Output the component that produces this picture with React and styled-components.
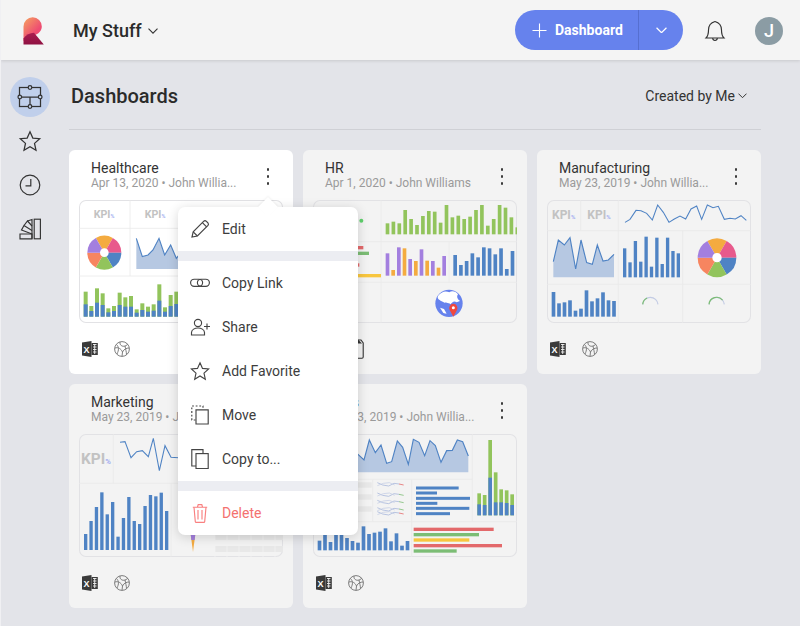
import React from 'react';
import styled, { createGlobalStyle } from 'styled-components';

const Global = createGlobalStyle`
    html, body {
        margin : 0;
        padding : 0;
        background : #e3e4e9;
    }
    body {
        font-family : Roboto, "Liberation Sans", sans-serif;
        color : #333;
        overflow : hidden;
    }
`

const Page = styled.div`
    width : 800px;
    height : 626px;
    overflow : hidden;
    box-sizing : border-box;
    border-left : 1px solid #f0f0f3;
`

/* top bar */
const Header = styled.header`
    height : 60px;
    background : #f4f4f4;
    box-shadow : 0 1px 3px rgba(0, 0, 0, 0.12);
    display : flex;
    align-items : center;
    padding : 0 17px 0 22px;
    box-sizing : border-box;
    position : relative;
`
const Brand = styled.svg`
    width : 21px;
    height : 28px;
    display : block;
    margin-right : 29px;
    margin-top : 1px;
`
const HeaderTitle = styled.div`
    display : flex;
    align-items : center;
    gap : 6px;
    font-size : 18px;
    font-weight : 500;
    color : #2b2b2b;
    flex : 1;
    padding-top : 1px;
`
const SplitButton = styled.div`
    display : flex;
    height : 40px;
    border-radius : 20px;
    background : #6682ed;
    color : #fff;
    align-items : stretch;
`
const MainAction = styled.div`
    width : 124px;
    box-sizing : border-box;
    display : flex;
    align-items : center;
    padding-left : 17px;
    gap : 8px;
    font-size : 14px;
    font-weight : 700;
    border-right : 1px solid #566fd0;
`
const CaretAction = styled.div`
    width : 44px;
    display : flex;
    align-items : center;
    justify-content : center;
`
const Bell = styled.svg`
    width : 24px;
    height : 24px;
    margin : 2px 28px 0 20px;
    display : block;
`
const Avatar = styled.div`
    width : 28px;
    height : 28px;
    border-radius : 50%;
    background : #8b9ca4;
    color : #fff;
    font-size : 18px;
    font-weight : 500;
    display : flex;
    align-items : center;
    justify-content : center;
    margin-top : 1px;
`

const Body = styled.div`
    display : flex;
`
const Sidebar = styled.nav`
    width : 68px;
    flex : none;
    padding : 17px 0 0 9px;
    box-sizing : border-box;
    display : flex;
    flex-direction : column;
`
const SideItem = styled.div`
    width : 40px;
    height : ${(p) => (p.$active ? '40px' : '44px')};
    border-radius : ${(p) => (p.$active ? '50%' : '0')};
    background : ${(p) => (p.$active ? '#c0cfeb' : 'transparent')};
    margin-bottom : ${(p) => (p.$active ? '2px' : '0')};
    display : flex;
    align-items : center;
    justify-content : center;
`
const Main = styled.main`
    width : 692px;
`
const PageHead = styled.div`
    height : 70px;
    box-sizing : border-box;
    border-bottom : 1px solid #cfd0d5;
    display : flex;
    align-items : center;
    justify-content : space-between;
    padding : 2px 14px 0 2px;
`
const PageTitle = styled.h1`
    margin : 0;
    font-size : 20px;
    font-weight : 500;
    color : #2b2b2b;
`
const Filter = styled.div`
    display : flex;
    align-items : center;
    gap : 3px;
    font-size : 14px;
    color : #333;
`
const CardGrid = styled.div`
    display : grid;
    grid-template-columns : repeat(3, 224px);
    grid-auto-rows : 224px;
    gap : 10px;
    margin-top : 20px;
`

/* dashboard card */
const Card = styled.article`
    position : relative;
    background : ${(p) => (p.$selected ? '#fff' : '#f3f3f3')};
    border-radius : 6px;
    padding : 0 10px;
`
const CardHead = styled.div`
    height : 50px;
    box-sizing : border-box;
    padding : 11px 0 0 12px;
    display : flex;
    justify-content : space-between;
`
const CardTitle = styled.div`
    font-size : 14px;
    line-height : 15px;
    color : #333;
`
const CardMeta = styled.div`
    font-size : 12px;
    line-height : 15px;
    color : #9a9a9a;
    white-space : nowrap;
`
const Kebab = styled.div`
    display : flex;
    flex-direction : column;
    gap : 4.5px;
    margin : 7px 14px 0 0;
`
const Dot = styled.span`
    width : 2.5px;
    height : 2.5px;
    border-radius : 50%;
    background : #3a3a3a;
`
const Thumb = styled.div`
    width : 204px;
    height : 123px;
    border-radius : 7px;
    box-shadow : inset 0 0 0 1px #e2e2e5;
    svg {
        display : block;
        width : 204px;
        height : 123px;
    }
    text {
        font-family : Roboto, "Liberation Sans", sans-serif;
    }
`
const CardFoot = styled.div`
    display : flex;
    gap : 16px;
    padding : 18px 0 0 3px;
`
const SourceIcon = styled.svg`
    width : 16px;
    height : 16px;
    display : block;
    text {
        font-family : "Liberation Sans", sans-serif;
    }
`

/* context menu */
const Menu = styled.div`
    position : absolute;
    left : 109px;
    top : 57px;
    width : 180px;
    background : #fff;
    border-radius : 7px;
    box-shadow : 0 2px 12px rgba(0, 0, 0, 0.16);
    z-index : 10;
`
const MenuCaret = styled.span`
    position : absolute;
    left : 83px;
    top : -7px;
    width : 14px;
    height : 14px;
    background : #fff;
    transform : rotate(45deg);
    box-shadow : -1px -1px 2px rgba(0, 0, 0, 0.05);
`
const MenuItem = styled.div`
    position : relative;
    height : 44px;
    display : flex;
    align-items : center;
    gap : 12px;
    padding-left : 12px;
    font-size : 14px;
    color : ${(p) => (p.$danger ? '#f4716f' : '#3d3d3d')};
`
const MenuGap = styled.div`
    height : 10px;
    background : #ecedf2;
`
const MenuIcon = styled.svg`
    width : 20px;
    height : 20px;
    display : block;
    flex : none;
    fill : none;
    stroke : ${(p) => (p.$danger ? '#f98080' : '#444')};
    stroke-width : 1.15;
`
const NavIcon = styled.svg`
    width : 26px;
    height : 26px;
    display : block;
    fill : none;
    stroke : #333;
    stroke-width : 1.25;
`

const Chevron = ({ w = 10, color = '#333', sw = 1.1 }) => (
    <svg width={w} height={w * 0.6} viewBox="0 0 10 6" style={{ display: 'block' }}>
        <path d="M0.5 0.7 L5 5.2 L9.5 0.7" fill="none" stroke={color} strokeWidth={sw} />
    </svg>
);

const ExcelIcon = () => (
    <SourceIcon viewBox="0 0 16 16">
        <path d="M0 1.6 L9.5 0 V16 L0 14.4 Z" fill="#3a3a3a" />
        <rect x="9.5" y="2" width="6.3" height="12" fill="#3a3a3a" />
        <path d="M11 3.5 H14.5 M11 6 H14.5 M11 8.5 H14.5 M11 11 H14.5 M12.7 3 V13" stroke="#f3f3f3" strokeWidth="0.9" />
        <text x="1.6" y="11.6" fontSize="9" fontWeight="700" fill="#fff">X</text>
    </SourceIcon>
);
const GlobeIcon = () => (
    <SourceIcon viewBox="0 0 16 16">
        <g fill="none" stroke="#777" strokeWidth="0.95">
            <circle cx="8" cy="8" r="7.4" />
            <path d="M2.5 3.5 C5 6 5 9 3 13 M6 1 C5.5 4 8 6 11 5 C13 4.4 14 3.5 13 2.6 M1 7 C4 6 7 7.5 8.5 11 L8 15.3 M15.2 7 C12.5 7 10 8 8.5 11 M11 5 C11.5 8 12.5 11 12.5 13.6" />
        </g>
    </SourceIcon>
);
const ClipIcon = () => (
    <SourceIcon viewBox="0 0 16 20" style={{ height: 20, marginTop: -2 }}>
        <path d="M9.5 1 H13 L15.2 4 V18 Q15.2 19.2 14 19.2 H2 Q1 19.2 1 18 V4 Q1 3 2 3 H9.5" fill="none" stroke="#333" strokeWidth="1.1" />
        <path d="M9.5 0 L14 4.5 H9.5 Z" fill="#333" />
    </SourceIcon>
);

/* chart parts, coordinates are 3x pixels so one unit is a third of a pixel */
const C = {
    blue: '#4f83c4',
    area: '#b6c8e2',
    green: '#92c45c',
    purple: '#a37fdf',
    orange: '#f4ab40',
    red: '#e3696b',
    grass: '#7cbd75',
    yellow: '#f8c63e',
    line: '#eaeaea',
};

const Bars = ({ x, pitch, w = 11, bottom, tops, colors = [C.blue] }) => (
    <g>
        {tops.map((t, i) => (
            <rect key={i} x={x + i * pitch} y={t} width={w} height={bottom - t} fill={colors[i % colors.length]} />
        ))}
    </g>
);
const HBars = ({ x, h = 10, rows }) => (
    <g>
        {rows.map(([y, to, color], i) => (
            <rect key={i} x={x} y={y - h / 2} width={to - x} height={h} fill={color} />
        ))}
    </g>
);
const toPoints = (pts) => pts.map((p) => p.join(',')).join(' ');
const Area = ({ pts, base }) => (
    <g>
        <polygon
            points={`${pts[0][0]},${base} ${toPoints(pts)} ${pts[pts.length - 1][0]},${base}`}
            fill={C.area}
        />
        <polyline points={toPoints(pts)} fill="none" stroke={C.blue} strokeWidth="3.4" />
    </g>
);
const Trend = ({ pts }) => <polyline points={toPoints(pts)} fill="none" stroke={C.blue} strokeWidth="3.2" />;
const Grid = ({ d, color = C.line }) => <path d={d} fill="none" stroke={color} strokeWidth="2.4" />;

const wedge = (cx, cy, r, a, b) => {
    const p = (d) => [cx + r * Math.sin((d * Math.PI) / 180), cy - r * Math.cos((d * Math.PI) / 180)];
    const [x1, y1] = p(a);
    const [x2, y2] = p(b);
    return `M${cx} ${cy} L${x1} ${y1} A${r} ${r} 0 0 1 ${x2} ${y2} Z`;
};
const Pie = ({ cx, cy, r, hole }) => (
    <g>
        {['#f4ab40', '#e85a8c', '#4f83c4', '#92c45c', '#f78560', '#a37fdf'].map((c, i) => (
            <path key={c} d={wedge(cx, cy, r, i * 60 - 30, i * 60 + 30)} fill={c} />
        ))}
        <circle cx={cx} cy={cy} r={hole} fill="#fff" />
    </g>
);
const Kpi = ({ x, y, size }) => (
    <text x={x} y={y} fontSize={size} fontWeight="700" fill="#c2c2c2" textAnchor="middle">
        KPI<tspan fontSize={size * 0.5} fill="#a3aef0">%</tspan>
    </text>
);
const Gauge = ({ cx, cy, r, split }) => {
    const a = (d) => `${cx + r * Math.sin((d * Math.PI) / 180)} ${cy - r * Math.cos((d * Math.PI) / 180)}`;
    return (
        <g fill="none" strokeWidth="3.6">
            <path d={`M${a(-85)} A${r} ${r} 0 0 1 ${a(85)}`} stroke="#c3cbe4" />
            <path d={`M${a(-85)} A${r} ${r} 0 0 1 ${a(split)}`} stroke="#7cbd75" />
        </g>
    );
};

const ThumbSvg = ({ ox, oy, children }) => (
    <svg viewBox={`${ox} ${oy} 612 369`}>{children}</svg>
);

const HealthcareThumb = () => (
    <ThumbSvg ox={28} oy={15}>
        <Grid d="M181 15 V243 M28 100 H640 M28 243 H640" />
        <Kpi x={103} y={68} size={32} />
        <Kpi x={256} y={68} size={32} />
        <Pie cx={104} cy={173} r={51} hole={13} />
        <Area
            base={222}
            pts={[[200, 130], [218, 185], [235, 180], [250, 165], [268, 130], [285, 180], [303, 150], [320, 190], [336, 170]]}
        />
        <Bars x={42} pitch={17} w={12} bottom={365} colors={[C.green]}
            tops={[290, 333, 280, 295, 340, 333, 293, 307, 303, 343, 325, 335, 328, 268, 337, 300, 290]} />
        <Bars x={42} pitch={17} w={12} bottom={365}
            tops={[328, 348, 323, 330, 352, 348, 330, 335, 335, 353, 345, 350, 347, 317, 350, 333, 327]} />
    </ThumbSvg>
);

const HrThumb = () => (
    <ThumbSvg ox={39} oy={15}>
        <Grid d="M243 15 V384 M447 140 V262 M39 140 H651 M39 262 H651" />
        <circle cx={184} cy={77} r={6} fill="#5fd16d" />
        <HBars x={60} h={10} rows={[[158, 190, C.red], [175, 207, C.grass], [210, 178, C.red], [242, 243, C.yellow]]} />
        <Bars x={257} pitch={17.7} bottom={118} colors={[C.green]}
            tops={[85, 80, 85, 45, 72, 90, 63, 48, 50, 83, 30, 67, 62, 72, 65, 45, 30, 92, 72, 30, 38, 67, 97]} />
        <Bars x={257} pitch={17} bottom={242} colors={[C.purple, C.orange]}
            tops={[175, 225, 157, 160, 192, 198, 163, 197, 198, 218, 183]} />
        <Bars x={460} pitch={17.2} bottom={242}
            tops={[180, 210, 198, 175, 187, 157, 160, 178, 160, 222, 168]} />
        <circle cx={447} cy={325} r={41} fill="#6682ed" />
        <path d="M414 303 C424 290 436 286 448 292 C456 286 468 290 474 298 C468 306 474 314 480 318 L470 322 C462 316 456 322 452 328 C444 320 436 326 428 320 C420 316 410 312 414 303 Z" fill="#fff" />
        <path d="M420 338 L432 342 L440 356 L430 354 Z" fill="#fff" />
        <path d="M460 365 L449 345 A12.5 12.5 0 1 1 471 345 Z" fill="#f0483e" />
        <circle cx={460} cy={338} r={4.5} fill="#fff" />
    </ThumbSvg>
);

const ManufacturingThumb = () => (
    <ThumbSvg ox={36} oy={15}>
        <Grid d="M137 15 V107 M250 15 V384 M443 107 V384 M36 107 H648 M36 268 H648" />
        <Kpi x={86} y={72} size={36} />
        <Kpi x={192} y={72} size={36} />
        <Trend pts={[[270, 82], [285, 73], [303, 46], [318, 47], [335, 55], [352, 75], [368, 30], [385, 52], [402, 82], [418, 72], [435, 63], [452, 72], [468, 42], [485, 33], [500, 73], [517, 30], [534, 38], [550, 34], [568, 73], [585, 70], [601, 72], [618, 62], [634, 76]]} />
        <Area base={247}
            pts={[[55, 200], [70, 135], [88, 150], [105, 128], [122, 222], [138, 135], [155, 203], [172, 208], [187, 150], [204, 198], [220, 195], [237, 178]]} />
        <Bars x={264} pitch={16.1} w={10} bottom={247}
            tops={[160, 202, 138, 200, 125, 215, 128, 207, 128, 168, 175]} />
        <Pie cx={546} cy={188} r={58} hole={14} />
        <Bars x={50} pitch={16.5} w={11} bottom={365}
            tops={[291, 325, 322, 316, 347, 341, 286, 319, 310, 292, 316, 318]} />
        <Gauge cx={346} cy={330} r={23} split={-25} />
        <Gauge cx={545} cy={330} r={23} split={50} />
    </ThumbSvg>
);

const MarketingThumb = () => (
    <ThumbSvg ox={27} oy={147}>
        <Grid d="M130 147 V295 M303 295 V516 M27 295 H639" />
        <Kpi x={78} y={238} size={46} />
        <Trend pts={[[150, 172], [165, 170], [183, 218], [200, 200], [217, 197], [235, 215], [250, 160], [268, 257], [285, 182], [303, 217], [325, 218], [342, 200]]} />
        <Bars x={42} pitch={16.2} w={10} bottom={495}
            tops={[447, 408, 366, 322, 388, 351, 455, 399, 336, 408, 417, 363, 330, 334, 323, 378]} />
        <path d="M362 447 H376 L369 501 Z" fill={C.orange} />
        <path d="M362 447 H376 L374 465 H364 Z" fill={C.purple} />
        {[447, 483].map((y) => (
            <rect key={y} x={435} y={y} width={204} height={18} fill="#e8e8e8" />
        ))}
        <path d="M435 447 V516 M471 447 V516 M507 447 V516 M543 447 V516 M579 447 V516 M615 447 V516" stroke="#f3f3f3" strokeWidth="2.4" />
    </ThumbSvg>
);

const Spark = ({ y, end }) => (
    <g fill="none" strokeWidth="2.4">
        <path d={`M232 ${y - 4} L248 ${y + 3} L266 ${y + 6} L282 ${y - 2} L297 ${y}`} stroke="#a8b8dc" />
        <path d={`M232 ${y + 5} L250 ${y - 2} L268 ${y - 4} L284 ${y + 3}`} stroke="#c6cfe6" />
        <path d={`M297 ${y} L311 ${y + 3}`} stroke={end} />
    </g>
);

const SalesThumb = () => (
    <ThumbSvg ox={39} oy={147}>
        <Grid d="M335 283 V516 M517 147 V410 M39 283 H517 M39 410 H651 M218 283 V410" />
        <Area base={262}
            pts={[[60, 200], [100, 170], [140, 220], [174, 208], [192, 225], [208, 165], [226, 203], [243, 180], [260, 235], [275, 230], [292, 168], [308, 187], [325, 238], [340, 163], [357, 172], [374, 212], [390, 167], [406, 182], [423, 232], [440, 197], [457, 196], [472, 165], [488, 170], [505, 213]]} />
        {[292, 328, 364].map((y) => (
            <rect key={y} x={60} y={y} width={155} height={16} fill="#e8e8e8" />
        ))}
        <Spark y={297} end={C.red} />
        <Spark y={328} end={C.grass} />
        <Spark y={350} end={C.grass} />
        <Spark y={372} end={C.grass} />
        <Spark y={384} end={C.red} />
        <HBars x={348} h={9} rows={[[309, 476, C.blue], [324, 411, C.blue], [340, 510, C.blue], [355, 412, C.blue], [370, 508, C.blue], [386, 450, C.blue]]} />
        <Bars x={532} pitch={16.5} bottom={391} colors={[C.green]} tops={[325, 330, 165, 262, 313, 316, 328]} />
        <Bars x={532} pitch={16.5} bottom={391} tops={[358, 360, 278, 352, 352, 354, 360]} />
        <Bars x={53} pitch={16.5} bottom={496}
            tops={[467, 450, 471, 450, 450, 459, 468, 473, 424, 447, 443, 440, 430, 469, 445, 482, 468]} />
        <HBars x={341} h={10} rows={[[433, 581, C.red], [449, 537, C.grass], [465, 508, C.yellow], [482, 606, C.red], [498, 470, C.grass]]} />
    </ThumbSvg>
);

const STAR = 'M10 1.8 L12.5 7.4 L18.6 8 L14 12.1 L15.3 18.2 L10 15 L4.7 18.2 L6 12.1 L1.4 8 L7.5 7.4 Z';

const menuItems = [
    { label: 'Copy Link', icon: (
        <>
            <rect x="0.6" y="6.2" width="12" height="7.2" rx="3.6" />
            <rect x="7.4" y="6.2" width="12" height="7.2" rx="3.6" />
        </>
    ) },
    { label: 'Share', icon: (
        <>
            <circle cx="8" cy="6" r="3.6" />
            <path d="M1.5 18 V15.5 C1.5 12.5 5 11 8 11 S14.5 12.5 14.5 15.5 V18 Z" />
            <path d="M14 9.5 H20 M17 6.5 V12.5" />
        </>
    ) },
    { label: 'Add Favorite', icon: <path d={STAR} /> },
    { label: 'Move', icon: (
        <>
            <path d="M6 19 V4.8 H18.2 V19 Z" />
            <path d="M5.5 15 H1.8 V1 H13 V4" strokeDasharray="1.8 1.8" />
        </>
    ) },
    { label: 'Copy to...', icon: (
        <>
            <rect x="6" y="4.6" width="12.2" height="15" />
            <path d="M6 17 H1.8 V0.6 H13 V4.6" />
        </>
    ) },
];

const ContextMenu = () => (
    <Menu>
        <MenuCaret />
        <MenuItem>
            <MenuIcon viewBox="0 0 20 20">
                <path d="M2 18 L3.2 12.8 L13.8 2.2 Q15 1.2 16.2 2.2 L18 4 Q19 5.2 18 6.4 L7.4 17 Z" />
                <path d="M12.4 3.6 L16.6 7.8 M3.2 12.8 L7.4 17" />
            </MenuIcon>
            Edit
        </MenuItem>
        <MenuGap />
        {menuItems.map((item) => (
            <MenuItem key={item.label}>
                <MenuIcon viewBox="0 0 20 20">{item.icon}</MenuIcon>
                {item.label}
            </MenuItem>
        ))}
        <MenuGap />
        <MenuItem $danger>
            <MenuIcon $danger viewBox="0 0 20 20">
                <path d="M2.8 4.2 H17.2 M7.5 4 L8.2 1.6 H11.8 L12.5 4" />
                <path d="M4 4.2 L5.3 18.6 Q5.4 19.4 6.2 19.4 H13.8 Q14.6 19.4 14.7 18.6 L16 4.2" />
                <path d="M8 7 V16.5 M12 7 V16.5" />
            </MenuIcon>
            Delete
        </MenuItem>
    </Menu>
);

const cards = [
    { title: 'Healthcare', meta: 'Apr 13, 2020 • John Willia...', thumb: <HealthcareThumb />, selected: true, source: <GlobeIcon /> },
    { title: 'HR', meta: 'Apr 1, 2020 • John Williams', thumb: <HrThumb />, source: <ClipIcon /> },
    { title: 'Manufacturing', meta: 'May 23, 2019 • John Willia...', thumb: <ManufacturingThumb />, source: <GlobeIcon /> },
    { title: 'Marketing', meta: 'May 23, 2019 • John Willia...', thumb: <MarketingThumb />, source: <GlobeIcon /> },
    { title: 'Sales', meta: 'May 23, 2019 • John Willia...', thumb: <SalesThumb />, source: <GlobeIcon /> },
];

const App = () => (
    <Page>
        <Global />
        <Header>
            <Brand viewBox="0 0 21 28">
                <defs>
                    <linearGradient id="logoTop" x1="0" y1="0" x2="0.8" y2="1">
                        <stop offset="0" stopColor="#f6a55f" />
                        <stop offset="0.7" stopColor="#ee4c72" />
                    </linearGradient>
                    <linearGradient id="logoBottom" x1="0" y1="0" x2="0" y2="1">
                        <stop offset="0" stopColor="#a91d50" />
                        <stop offset="1" stopColor="#8f1142" />
                    </linearGradient>
                </defs>
                <path d="M0.5 24 V9.5 A9.2 9.2 0 0 1 9.7 0.2 A9.2 9.2 0 0 1 18.8 9.4 C18.8 13 16.5 16 13 17.5 L0.5 24 Z" fill="url(#logoTop)" />
                <path d="M0.5 27.6 V21.5 C3 18 7 15.8 11 15.8 L20.8 27.6 Z" fill="url(#logoBottom)" />
            </Brand>
            <HeaderTitle>
                My Stuff
                <Chevron w={10} />
            </HeaderTitle>
            <SplitButton>
                <MainAction>
                    <svg width="15" height="15" viewBox="0 0 15 15" style={{ display: 'block' }}>
                        <path d="M7.5 0.5 V14.5 M0.5 7.5 H14.5" stroke="#fff" strokeWidth="1.1" fill="none" />
                    </svg>
                    Dashboard
                </MainAction>
                <CaretAction>
                    <Chevron w={11} color="#fff" />
                </CaretAction>
            </SplitButton>
            <Bell viewBox="0 0 24 24" fill="none" stroke="#333" strokeWidth="1.15">
                <path d="M3 19 C5 17 5.5 15 5.5 11 C5.5 6.5 8.5 3.5 12 2.5 C15.5 3.5 18.5 6.5 18.5 11 C18.5 15 19 17 21 19 Z" />
                <path d="M9.6 19.2 C10 22.2 14 22.2 14.4 19.2" />
            </Bell>
            <Avatar>J</Avatar>
        </Header>
        <Body>
            <Sidebar>
                <SideItem $active>
                    <NavIcon viewBox="0 0 26 26">
                        <rect x="2.5" y="3.5" width="21" height="19" />
                        <path d="M2.5 13 H23.5 M13 13 V22.5" />
                        <g fill="#c0cfeb">
                            <circle cx="13" cy="3.5" r="1.8" />
                            <circle cx="2.8" cy="13" r="1.8" />
                            <circle cx="23.2" cy="13" r="1.8" />
                            <circle cx="13" cy="22.5" r="1.8" />
                        </g>
                    </NavIcon>
                </SideItem>
                <SideItem>
                    <NavIcon viewBox="-1.5 -1.5 23 23" style={{ strokeWidth: 1.1 }}>
                        <path d={STAR} />
                    </NavIcon>
                </SideItem>
                <SideItem>
                    <NavIcon viewBox="0 0 26 26" style={{ strokeWidth: 1.2 }}>
                        <circle cx="13" cy="13" r="9.8" />
                        <path d="M13.8 7 V13.8 H8.5" />
                    </NavIcon>
                </SideItem>
                <SideItem>
                    <NavIcon viewBox="0 0 26 26" style={{ strokeWidth: 1.15 }}>
                        <rect x="17.2" y="3.2" width="6.2" height="19.6" />
                        <path d="M15 22.8 H3 V18 H15 Z" />
                        <path d="M15 18 L4.5 14 L7 9.5 L15 14.5" />
                        <path d="M7 9.5 L10.5 5 L15 10" />
                        <path d="M10.5 5 L15 3.5 V22.8" />
                    </NavIcon>
                </SideItem>
            </Sidebar>
            <Main>
                <PageHead>
                    <PageTitle>Dashboards</PageTitle>
                    <Filter>
                        Created by Me
                        <Chevron w={9} />
                    </Filter>
                </PageHead>
                <CardGrid>
                    {cards.map((card) => (
                        <Card key={card.title} $selected={card.selected}>
                            <CardHead>
                                <div>
                                    <CardTitle>{card.title}</CardTitle>
                                    <CardMeta>{card.meta}</CardMeta>
                                </div>
                                <Kebab>
                                    <Dot />
                                    <Dot />
                                    <Dot />
                                </Kebab>
                            </CardHead>
                            <Thumb>{card.thumb}</Thumb>
                            <CardFoot>
                                <ExcelIcon />
                                {card.source}
                            </CardFoot>
                            {card.selected && <ContextMenu />}
                        </Card>
                    ))}
                </CardGrid>
            </Main>
        </Body>
    </Page>
);

export default App;
